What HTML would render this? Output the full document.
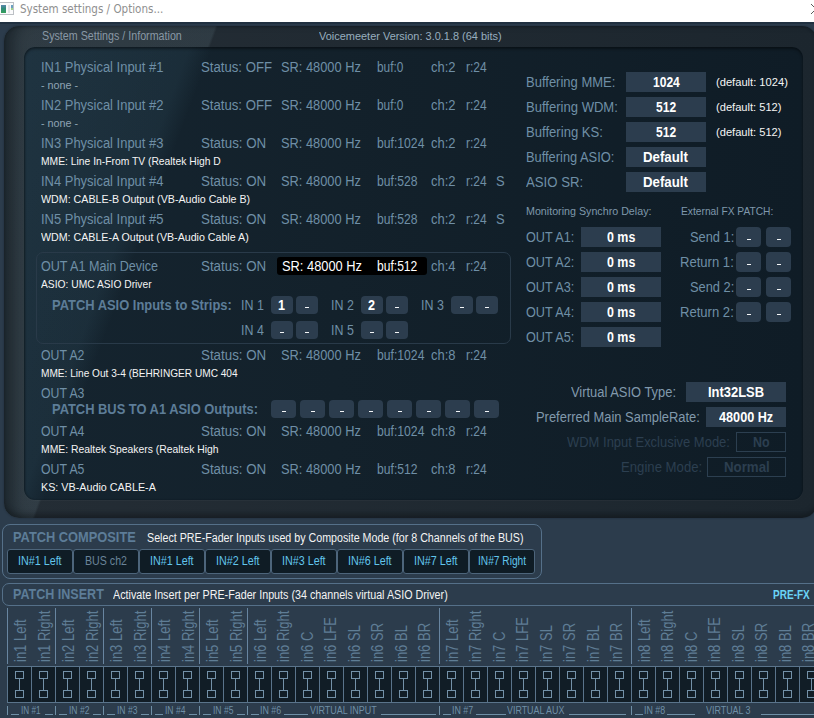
<!DOCTYPE html>
<html><head><meta charset="utf-8"><title>System settings / Options...</title>
<style>
html,body{margin:0;padding:0;}
body{width:814px;height:718px;overflow:hidden;position:relative;background:#2c3c4c;font-family:"Liberation Sans",Arial,sans-serif;}
.abs{position:absolute;white-space:nowrap;}
.t{position:absolute;white-space:nowrap;line-height:1;transform-origin:0 0;}
#titlebar{position:absolute;left:0;top:0;width:814px;height:22px;background:#fff;}
#outer{position:absolute;left:4px;top:26px;width:813px;height:492px;border-radius:15px;background:linear-gradient(110.4deg,rgba(196,243,255,0.07) 0px,rgba(196,243,255,0.08) 198px,rgba(196,243,255,0) 200.5px),linear-gradient(90deg,#242d35 0%,#1c262e 100%);box-shadow:0 0 2px rgba(10,20,30,0.45),inset 0 -4px 5px rgba(0,0,0,0.25),inset 16px 0 12px -6px rgba(8,14,20,0.4),inset 0 2px 3px -1px rgba(8,14,20,0.3);}
#inner{position:absolute;left:24px;top:47px;width:779px;height:453px;border-radius:11px;background:linear-gradient(110.4deg,rgba(137,217,255,0.085) 0px,rgba(137,217,255,0.06) 155px,rgba(137,217,255,0) 177px),linear-gradient(90deg,#15242f 0%,#13212b 40%,#0f1c26 100%);box-shadow:inset 0 2px 3px rgba(0,0,0,0.4),inset 1px 0 2px rgba(0,0,0,0.25),0 1px 1px rgba(255,255,255,0.035);}
.box{position:absolute;background:#2c3d4e;}
.obox{position:absolute;border:1px solid #2c3f50;box-sizing:border-box;}
.btn{position:absolute;border-radius:4px;background:#2c3d4e;}
.dash{position:absolute;width:4px;height:1.5px;background:#f4f6f8;}
.pc{position:absolute;top:549px;width:66px;height:25px;box-sizing:border-box;border:1px solid #4d657b;border-radius:3px;background:#0f1c25;}
.vl{position:absolute;transform-origin:0 0;font-size:17px;line-height:1;color:#5f7d95;white-space:nowrap;}
.cell{position:absolute;top:666px;width:25px;height:37px;box-sizing:border-box;border:1px solid #5a748b;background:#111d26;}
</style></head><body>
<div id="titlebar">
<svg class="abs" style="left:0;top:2px" width="15" height="14" viewBox="0 0 15 14"><rect x="-2" y="0.5" width="15.5" height="12" fill="#fbfbfc" stroke="#bcc0c5"/><defs><linearGradient id="ig" x1="0" y1="0" x2="0" y2="1"><stop offset="0" stop-color="#5a86ad"/><stop offset="0.45" stop-color="#2f8a78"/><stop offset="1" stop-color="#35a05a"/></linearGradient></defs><rect x="1" y="3" width="5" height="8" fill="url(#ig)"/><rect x="8" y="3" width="2" height="8" fill="#e2e4e7"/><rect x="11" y="3" width="2" height="4" fill="#6b9fc0"/><rect x="11" y="6" width="2" height="2" fill="#9fd08a"/></svg>
<svg class="abs" style="left:808px;top:2px" width="6" height="14" viewBox="0 0 6 14"><path d="M3 2 L13 12 M3 12 L13 2" stroke="#5a5a5a" stroke-width="1" fill="none"/></svg>
</div>
<div class="abs" style="left:0;top:22px;width:814px;height:2px;background:#203040"></div>
<div id="outer"></div>
<div id="inner"></div>
<div class="abs" style="left:36px;top:252px;width:475px;height:92px;box-sizing:border-box;border:1px solid #293a49;border-radius:7px;"></div>
<div class="abs" style="left:277px;top:257px;width:150px;height:18px;border-radius:3px;background:#000;"></div>
<div class="abs" style="left:2px;top:524px;width:540px;height:55px;box-sizing:border-box;border:1px solid #557089;border-radius:8px;"></div>
<div class="abs" style="left:2px;top:583px;width:830px;height:23px;box-sizing:border-box;border:1px solid #557089;border-radius:7px;"></div>

<div class="pc" style="left:7px"></div>
<div class="pc" style="left:73px"></div>
<div class="pc" style="left:139px"></div>
<div class="pc" style="left:205px"></div>
<div class="pc" style="left:271px"></div>
<div class="pc" style="left:337px"></div>
<div class="pc" style="left:403px"></div>
<div class="pc" style="left:469px"></div>
<div class="btn" style="left:271px;top:296px;width:22px;height:18px"></div>
<div class="btn" style="left:296px;top:296px;width:22px;height:18px"></div>
<div class="dash" style="left:305.0px;top:306.7px"></div>
<div class="btn" style="left:361px;top:296px;width:22px;height:18px"></div>
<div class="btn" style="left:386px;top:296px;width:22px;height:18px"></div>
<div class="dash" style="left:395.0px;top:306.7px"></div>
<div class="btn" style="left:451px;top:296px;width:22px;height:18px"></div>
<div class="dash" style="left:460.0px;top:306.7px"></div>
<div class="btn" style="left:476px;top:296px;width:22px;height:18px"></div>
<div class="dash" style="left:485.0px;top:306.7px"></div>
<div class="btn" style="left:271px;top:321px;width:22px;height:18px"></div>
<div class="dash" style="left:280.0px;top:331.7px"></div>
<div class="btn" style="left:296px;top:321px;width:22px;height:18px"></div>
<div class="dash" style="left:305.0px;top:331.7px"></div>
<div class="btn" style="left:361px;top:321px;width:22px;height:18px"></div>
<div class="dash" style="left:370.0px;top:331.7px"></div>
<div class="btn" style="left:386px;top:321px;width:22px;height:18px"></div>
<div class="dash" style="left:395.0px;top:331.7px"></div>
<div class="btn" style="left:271px;top:400px;width:25px;height:18px"></div>
<div class="dash" style="left:281.5px;top:410.7px"></div>
<div class="btn" style="left:300px;top:400px;width:25px;height:18px"></div>
<div class="dash" style="left:310.5px;top:410.7px"></div>
<div class="btn" style="left:329px;top:400px;width:25px;height:18px"></div>
<div class="dash" style="left:339.5px;top:410.7px"></div>
<div class="btn" style="left:358px;top:400px;width:25px;height:18px"></div>
<div class="dash" style="left:368.5px;top:410.7px"></div>
<div class="btn" style="left:387px;top:400px;width:25px;height:18px"></div>
<div class="dash" style="left:397.5px;top:410.7px"></div>
<div class="btn" style="left:416px;top:400px;width:25px;height:18px"></div>
<div class="dash" style="left:426.5px;top:410.7px"></div>
<div class="btn" style="left:445px;top:400px;width:25px;height:18px"></div>
<div class="dash" style="left:455.5px;top:410.7px"></div>
<div class="btn" style="left:474px;top:400px;width:25px;height:18px"></div>
<div class="dash" style="left:484.5px;top:410.7px"></div>
<div class="btn" style="left:736px;top:227px;width:25px;height:20px"></div>
<div class="dash" style="left:746.5px;top:238.7px"></div>
<div class="btn" style="left:766px;top:227px;width:25px;height:20px"></div>
<div class="dash" style="left:776.5px;top:238.7px"></div>
<div class="btn" style="left:736px;top:252px;width:25px;height:20px"></div>
<div class="dash" style="left:746.5px;top:263.7px"></div>
<div class="btn" style="left:766px;top:252px;width:25px;height:20px"></div>
<div class="dash" style="left:776.5px;top:263.7px"></div>
<div class="btn" style="left:736px;top:277px;width:25px;height:20px"></div>
<div class="dash" style="left:746.5px;top:288.7px"></div>
<div class="btn" style="left:766px;top:277px;width:25px;height:20px"></div>
<div class="dash" style="left:776.5px;top:288.7px"></div>
<div class="btn" style="left:736px;top:302px;width:25px;height:20px"></div>
<div class="dash" style="left:746.5px;top:313.7px"></div>
<div class="btn" style="left:766px;top:302px;width:25px;height:20px"></div>
<div class="dash" style="left:776.5px;top:313.7px"></div>
<div class="box" style="left:626px;top:72px;width:80px;height:20px"></div>
<div class="box" style="left:626px;top:97px;width:80px;height:20px"></div>
<div class="box" style="left:626px;top:122px;width:80px;height:20px"></div>
<div class="box" style="left:626px;top:147px;width:80px;height:20px"></div>
<div class="box" style="left:626px;top:172px;width:80px;height:20px"></div>
<div class="box" style="left:581px;top:227px;width:80px;height:20px"></div>
<div class="box" style="left:581px;top:252px;width:80px;height:20px"></div>
<div class="box" style="left:581px;top:277px;width:80px;height:20px"></div>
<div class="box" style="left:581px;top:302px;width:80px;height:20px"></div>
<div class="box" style="left:581px;top:327px;width:80px;height:20px"></div>
<div class="box" style="left:686px;top:382px;width:100px;height:20px"></div>
<div class="box" style="left:706px;top:407px;width:80px;height:20px"></div>
<div class="obox" style="left:736px;top:432px;width:50px;height:20px"></div>
<div class="obox" style="left:707px;top:457px;width:79px;height:20px"></div>
<div class="t" id="t0" style="left:42.1px;top:30.1px;font-size:12px;color:#8998a5;transform:scaleX(0.8920);">System Settings / Information</div>
<div class="t" id="t1" style="left:319.0px;top:31.0px;font-size:11px;color:#98aebf;transform:scaleX(0.9958);">Voicemeeter Version: 3.0.1.8 (64 bits)</div>
<div class="t" id="t2" style="left:40.5px;top:60.1px;font-size:14px;color:#6f8fa6;transform:scaleX(0.9254);">IN1 Physical Input #1</div>
<div class="t" id="t3" style="left:201.3px;top:60.1px;font-size:14px;color:#6f8fa6;transform:scaleX(0.9411);">Status: OFF</div>
<div class="t" id="t4" style="left:281.4px;top:60.1px;font-size:14px;color:#6f8fa6;transform:scaleX(0.9156);">SR: 48000 Hz</div>
<div class="t" id="t5" style="left:376.9px;top:60.1px;font-size:14px;color:#6f8fa6;transform:scaleX(0.8453);">buf:0</div>
<div class="t" id="t6" style="left:431.2px;top:60.1px;font-size:14px;color:#6f8fa6;transform:scaleX(0.9259);">ch:2</div>
<div class="t" id="t7" style="left:466.3px;top:60.1px;font-size:14px;color:#6f8fa6;transform:scaleX(0.8587);">r:24</div>
<div class="t" id="t8" style="left:41.3px;top:79.7px;font-size:11px;color:#8fa4b4;transform:scaleX(0.9805);">- none -</div>
<div class="t" id="t9" style="left:40.5px;top:98.1px;font-size:14px;color:#6f8fa6;transform:scaleX(0.9254);">IN2 Physical Input #2</div>
<div class="t" id="t10" style="left:201.3px;top:98.1px;font-size:14px;color:#6f8fa6;transform:scaleX(0.9411);">Status: OFF</div>
<div class="t" id="t11" style="left:281.4px;top:98.1px;font-size:14px;color:#6f8fa6;transform:scaleX(0.9156);">SR: 48000 Hz</div>
<div class="t" id="t12" style="left:376.9px;top:98.1px;font-size:14px;color:#6f8fa6;transform:scaleX(0.8453);">buf:0</div>
<div class="t" id="t13" style="left:431.2px;top:98.1px;font-size:14px;color:#6f8fa6;transform:scaleX(0.9259);">ch:2</div>
<div class="t" id="t14" style="left:466.3px;top:98.1px;font-size:14px;color:#6f8fa6;transform:scaleX(0.8587);">r:24</div>
<div class="t" id="t15" style="left:41.3px;top:117.7px;font-size:11px;color:#8fa4b4;transform:scaleX(0.9805);">- none -</div>
<div class="t" id="t16" style="left:40.5px;top:136.1px;font-size:14px;color:#6f8fa6;transform:scaleX(0.9254);">IN3 Physical Input #3</div>
<div class="t" id="t17" style="left:201.3px;top:136.1px;font-size:14px;color:#6f8fa6;transform:scaleX(0.9531);">Status: ON</div>
<div class="t" id="t18" style="left:281.4px;top:136.1px;font-size:14px;color:#6f8fa6;transform:scaleX(0.9156);">SR: 48000 Hz</div>
<div class="t" id="t19" style="left:376.9px;top:136.1px;font-size:14px;color:#6f8fa6;transform:scaleX(0.8700);">buf:1024</div>
<div class="t" id="t20" style="left:431.2px;top:136.1px;font-size:14px;color:#6f8fa6;transform:scaleX(0.9259);">ch:2</div>
<div class="t" id="t21" style="left:466.3px;top:136.1px;font-size:14px;color:#6f8fa6;transform:scaleX(0.8587);">r:24</div>
<div class="t" id="t22" style="left:41.3px;top:155.7px;font-size:11px;color:#f4f4f4;transform:scaleX(0.9375);">MME: Line In-From TV (Realtek High D</div>
<div class="t" id="t23" style="left:40.5px;top:174.1px;font-size:14px;color:#6f8fa6;transform:scaleX(0.9254);">IN4 Physical Input #4</div>
<div class="t" id="t24" style="left:201.3px;top:174.1px;font-size:14px;color:#6f8fa6;transform:scaleX(0.9531);">Status: ON</div>
<div class="t" id="t25" style="left:281.4px;top:174.1px;font-size:14px;color:#6f8fa6;transform:scaleX(0.9156);">SR: 48000 Hz</div>
<div class="t" id="t26" style="left:376.9px;top:174.1px;font-size:14px;color:#6f8fa6;transform:scaleX(0.8674);">buf:528</div>
<div class="t" id="t27" style="left:431.2px;top:174.1px;font-size:14px;color:#6f8fa6;transform:scaleX(0.9259);">ch:2</div>
<div class="t" id="t28" style="left:466.3px;top:174.1px;font-size:14px;color:#6f8fa6;transform:scaleX(0.8587);">r:24</div>
<div class="t" id="t29" style="left:496.2px;top:174.1px;font-size:14px;color:#6f8fa6;transform:scaleX(0.9222);">S</div>
<div class="t" id="t30" style="left:41.3px;top:193.7px;font-size:11px;color:#f4f4f4;transform:scaleX(0.9692);">WDM: CABLE-B Output (VB-Audio Cable B)</div>
<div class="t" id="t31" style="left:40.5px;top:212.1px;font-size:14px;color:#6f8fa6;transform:scaleX(0.9254);">IN5 Physical Input #5</div>
<div class="t" id="t32" style="left:201.3px;top:212.1px;font-size:14px;color:#6f8fa6;transform:scaleX(0.9531);">Status: ON</div>
<div class="t" id="t33" style="left:281.4px;top:212.1px;font-size:14px;color:#6f8fa6;transform:scaleX(0.9156);">SR: 48000 Hz</div>
<div class="t" id="t34" style="left:376.9px;top:212.1px;font-size:14px;color:#6f8fa6;transform:scaleX(0.8674);">buf:528</div>
<div class="t" id="t35" style="left:431.2px;top:212.1px;font-size:14px;color:#6f8fa6;transform:scaleX(0.9259);">ch:2</div>
<div class="t" id="t36" style="left:466.3px;top:212.1px;font-size:14px;color:#6f8fa6;transform:scaleX(0.8587);">r:24</div>
<div class="t" id="t37" style="left:496.2px;top:212.1px;font-size:14px;color:#6f8fa6;transform:scaleX(0.9222);">S</div>
<div class="t" id="t38" style="left:41.3px;top:231.7px;font-size:11px;color:#f4f4f4;transform:scaleX(0.9678);">WDM: CABLE-A Output (VB-Audio Cable A)</div>
<div class="t" id="t39" style="left:41.4px;top:259.1px;font-size:14px;color:#6f8fa6;transform:scaleX(0.8975);">OUT A1 Main Device</div>
<div class="t" id="t40" style="left:201.3px;top:259.1px;font-size:14px;color:#6f8fa6;transform:scaleX(0.9531);">Status: ON</div>
<div class="t" id="t41" style="left:431.2px;top:259.1px;font-size:14px;color:#6f8fa6;transform:scaleX(0.9259);">ch:4</div>
<div class="t" id="t42" style="left:466.3px;top:259.1px;font-size:14px;color:#6f8fa6;transform:scaleX(0.8587);">r:24</div>
<div class="t" id="t43" style="left:41.3px;top:278.7px;font-size:11px;color:#f4f4f4;transform:scaleX(0.9329);">ASIO: UMC ASIO Driver</div>
<div class="t" id="t44" style="left:281.6px;top:259.1px;font-size:14px;color:#fff;transform:scaleX(0.9179);">SR: 48000 Hz</div>
<div class="t" id="t45" style="left:377.1px;top:259.1px;font-size:14px;color:#fff;transform:scaleX(0.8631);">buf:512</div>
<div class="t" id="t46" style="left:41.4px;top:348.1px;font-size:14px;color:#6f8fa6;transform:scaleX(0.8763);">OUT A2</div>
<div class="t" id="t47" style="left:201.3px;top:348.1px;font-size:14px;color:#6f8fa6;transform:scaleX(0.9531);">Status: ON</div>
<div class="t" id="t48" style="left:281.4px;top:348.1px;font-size:14px;color:#6f8fa6;transform:scaleX(0.9156);">SR: 48000 Hz</div>
<div class="t" id="t49" style="left:376.9px;top:348.1px;font-size:14px;color:#6f8fa6;transform:scaleX(0.8700);">buf:1024</div>
<div class="t" id="t50" style="left:431.2px;top:348.1px;font-size:14px;color:#6f8fa6;transform:scaleX(0.9259);">ch:8</div>
<div class="t" id="t51" style="left:466.3px;top:348.1px;font-size:14px;color:#6f8fa6;transform:scaleX(0.8587);">r:24</div>
<div class="t" id="t52" style="left:41.3px;top:367.7px;font-size:11px;color:#f4f4f4;transform:scaleX(0.9190);">MME: Line Out 3-4 (BEHRINGER UMC 404</div>
<div class="t" id="t53" style="left:41.4px;top:386.1px;font-size:14px;color:#6f8fa6;transform:scaleX(0.8763);">OUT A3</div>
<div class="t" id="t54" style="left:41.4px;top:424.1px;font-size:14px;color:#6f8fa6;transform:scaleX(0.8763);">OUT A4</div>
<div class="t" id="t55" style="left:201.3px;top:424.1px;font-size:14px;color:#6f8fa6;transform:scaleX(0.9531);">Status: ON</div>
<div class="t" id="t56" style="left:281.4px;top:424.1px;font-size:14px;color:#6f8fa6;transform:scaleX(0.9156);">SR: 48000 Hz</div>
<div class="t" id="t57" style="left:376.9px;top:424.1px;font-size:14px;color:#6f8fa6;transform:scaleX(0.8700);">buf:1024</div>
<div class="t" id="t58" style="left:431.2px;top:424.1px;font-size:14px;color:#6f8fa6;transform:scaleX(0.9259);">ch:8</div>
<div class="t" id="t59" style="left:466.3px;top:424.1px;font-size:14px;color:#6f8fa6;transform:scaleX(0.8587);">r:24</div>
<div class="t" id="t60" style="left:41.3px;top:443.7px;font-size:11px;color:#f4f4f4;transform:scaleX(0.9433);">MME: Realtek Speakers (Realtek High</div>
<div class="t" id="t61" style="left:41.4px;top:462.1px;font-size:14px;color:#6f8fa6;transform:scaleX(0.8763);">OUT A5</div>
<div class="t" id="t62" style="left:201.3px;top:462.1px;font-size:14px;color:#6f8fa6;transform:scaleX(0.9531);">Status: ON</div>
<div class="t" id="t63" style="left:281.4px;top:462.1px;font-size:14px;color:#6f8fa6;transform:scaleX(0.9156);">SR: 48000 Hz</div>
<div class="t" id="t64" style="left:376.9px;top:462.1px;font-size:14px;color:#6f8fa6;transform:scaleX(0.8674);">buf:512</div>
<div class="t" id="t65" style="left:431.2px;top:462.1px;font-size:14px;color:#6f8fa6;transform:scaleX(0.9259);">ch:8</div>
<div class="t" id="t66" style="left:466.3px;top:462.1px;font-size:14px;color:#6f8fa6;transform:scaleX(0.8587);">r:24</div>
<div class="t" id="t67" style="left:41.3px;top:481.7px;font-size:11px;color:#f4f4f4;transform:scaleX(0.9784);">KS: VB-Audio CABLE-A</div>
<div class="t" id="t68" style="left:51.5px;top:298.1px;font-size:14px;color:#5d7d98;font-weight:bold;transform:scaleX(0.9224);">PATCH ASIO Inputs to Strips:</div>
<div class="t" id="t69" style="left:51.5px;top:401.6px;font-size:14px;color:#5d7d98;font-weight:bold;transform:scaleX(0.9205);">PATCH BUS TO A1 ASIO Outputs:</div>
<div class="t" id="t70" style="left:240.5px;top:298.1px;font-size:14px;color:#6f8fa6;transform:scaleX(0.8879);">IN 1</div>
<div class="t" id="t71" style="left:330.5px;top:298.1px;font-size:14px;color:#6f8fa6;transform:scaleX(0.8879);">IN 2</div>
<div class="t" id="t72" style="left:420.5px;top:298.1px;font-size:14px;color:#6f8fa6;transform:scaleX(0.8879);">IN 3</div>
<div class="t" id="t73" style="left:240.5px;top:323.1px;font-size:14px;color:#6f8fa6;transform:scaleX(0.8879);">IN 4</div>
<div class="t" id="t74" style="left:330.5px;top:323.1px;font-size:14px;color:#6f8fa6;transform:scaleX(0.8879);">IN 5</div>
<div class="t" id="t75" style="left:525.5px;top:75.1px;font-size:14px;color:#6f8fa6;transform:scaleX(0.9286);">Buffering MME:</div>
<div class="t" id="t76" style="left:716.3px;top:76.7px;font-size:11px;color:#f4f4f4;transform:scaleX(1.0132);">(default: 1024)</div>
<div class="t" id="t77" style="left:525.5px;top:100.1px;font-size:14px;color:#6f8fa6;transform:scaleX(0.9322);">Buffering WDM:</div>
<div class="t" id="t78" style="left:716.3px;top:101.7px;font-size:11px;color:#f4f4f4;transform:scaleX(1.0100);">(default: 512)</div>
<div class="t" id="t79" style="left:525.5px;top:125.1px;font-size:14px;color:#6f8fa6;transform:scaleX(0.9359);">Buffering KS:</div>
<div class="t" id="t80" style="left:716.3px;top:126.7px;font-size:11px;color:#f4f4f4;transform:scaleX(1.0100);">(default: 512)</div>
<div class="t" id="t81" style="left:525.5px;top:150.1px;font-size:14px;color:#6f8fa6;transform:scaleX(0.9177);">Buffering ASIO:</div>
<div class="t" id="t82" style="left:526.4px;top:175.1px;font-size:14px;color:#6f8fa6;transform:scaleX(0.9416);">ASIO SR:</div>
<div class="t" id="t83" style="left:526.4px;top:206.4px;font-size:11px;color:#7f98ab;transform:scaleX(0.9725);">Monitoring Synchro Delay:</div>
<div class="t" id="t84" style="left:681.0px;top:206.4px;font-size:11px;color:#7f98ab;transform:scaleX(0.9307);">External FX PATCH:</div>
<div class="t" id="t85" style="left:526.4px;top:230.1px;font-size:14px;color:#6f8fa6;transform:scaleX(0.9036);">OUT A1:</div>
<div class="t" id="t86" style="left:526.4px;top:255.1px;font-size:14px;color:#6f8fa6;transform:scaleX(0.9036);">OUT A2:</div>
<div class="t" id="t87" style="left:526.4px;top:280.1px;font-size:14px;color:#6f8fa6;transform:scaleX(0.9036);">OUT A3:</div>
<div class="t" id="t88" style="left:526.4px;top:305.1px;font-size:14px;color:#6f8fa6;transform:scaleX(0.9036);">OUT A4:</div>
<div class="t" id="t89" style="left:526.4px;top:330.1px;font-size:14px;color:#6f8fa6;transform:scaleX(0.9036);">OUT A5:</div>
<div class="t" id="t90" style="left:689.5px;top:230.1px;font-size:14px;color:#6f8fa6;transform:scaleX(0.9183);">Send 1:</div>
<div class="t" id="t91" style="left:680.1px;top:255.1px;font-size:14px;color:#6f8fa6;transform:scaleX(0.9336);">Return 1:</div>
<div class="t" id="t92" style="left:689.5px;top:280.1px;font-size:14px;color:#6f8fa6;transform:scaleX(0.9183);">Send 2:</div>
<div class="t" id="t93" style="left:680.1px;top:305.1px;font-size:14px;color:#6f8fa6;transform:scaleX(0.9336);">Return 2:</div>
<div class="t" id="t94" style="left:571.3px;top:385.1px;font-size:14px;color:#8199ac;transform:scaleX(0.9218);">Virtual ASIO Type:</div>
<div class="t" id="t95" style="left:535.5px;top:410.1px;font-size:14px;color:#8199ac;transform:scaleX(0.9235);">Preferred Main SampleRate:</div>
<div class="t" id="t96" style="left:566.7px;top:435.1px;font-size:14px;color:#2c3f50;transform:scaleX(0.9266);">WDM Input Exclusive Mode:</div>
<div class="t" id="t97" style="left:621.0px;top:460.1px;font-size:14px;color:#2c3f50;transform:scaleX(0.9396);">Engine Mode:</div>
<div class="t" id="t98" style="left:12.7px;top:529.9px;font-size:14px;color:#5d7d98;font-weight:bold;transform:scaleX(0.9162);">PATCH COMPOSITE</div>
<div class="t" id="t99" style="left:146.5px;top:531.8px;font-size:12px;color:#f4f4f4;transform:scaleX(0.8903);">Select PRE-Fader Inputs used by Composite Mode (for 8 Channels of the BUS)</div>
<div class="t" id="t100" style="left:18.0px;top:554.8px;font-size:12px;color:#62c5ec;transform:scaleX(0.8953);">IN#1 Left</div>
<div class="t" id="t101" style="left:85.3px;top:554.8px;font-size:12px;color:#6a8499;transform:scaleX(0.8871);">BUS ch2</div>
<div class="t" id="t102" style="left:150.0px;top:554.8px;font-size:12px;color:#62c5ec;transform:scaleX(0.8953);">IN#1 Left</div>
<div class="t" id="t103" style="left:216.0px;top:554.8px;font-size:12px;color:#62c5ec;transform:scaleX(0.8953);">IN#2 Left</div>
<div class="t" id="t104" style="left:282.0px;top:554.8px;font-size:12px;color:#62c5ec;transform:scaleX(0.8953);">IN#3 Left</div>
<div class="t" id="t105" style="left:348.0px;top:554.8px;font-size:12px;color:#62c5ec;transform:scaleX(0.8953);">IN#6 Left</div>
<div class="t" id="t106" style="left:414.0px;top:554.8px;font-size:12px;color:#62c5ec;transform:scaleX(0.8953);">IN#7 Left</div>
<div class="t" id="t107" style="left:477.8px;top:554.8px;font-size:12px;color:#62c5ec;transform:scaleX(0.8481);">IN#7 Right</div>
<div class="t" id="t108" style="left:12.7px;top:586.9px;font-size:14px;color:#5d7d98;font-weight:bold;transform:scaleX(0.8957);">PATCH INSERT</div>
<div class="t" id="t109" style="left:112.5px;top:589.1px;font-size:12px;color:#f4f4f4;transform:scaleX(0.8946);">Activate Insert per PRE-Fader Inputs (34 channels virtual ASIO Driver)</div>
<div class="t" id="t110" style="left:772.5px;top:588.6px;font-size:12px;color:#6ad4f6;font-weight:bold;transform:scaleX(0.8364);">PRE-FX</div>
<div class="t" id="t111" style="left:21.4px;top:705.8px;font-size:10px;color:#6f8fa6;transform:scaleX(0.8135);">IN #1</div>
<div class="t" id="t112" style="left:69.4px;top:705.8px;font-size:10px;color:#6f8fa6;transform:scaleX(0.8546);">IN #2</div>
<div class="t" id="t113" style="left:117.4px;top:705.8px;font-size:10px;color:#6f8fa6;transform:scaleX(0.8546);">IN #3</div>
<div class="t" id="t114" style="left:165.4px;top:705.8px;font-size:10px;color:#6f8fa6;transform:scaleX(0.8546);">IN #4</div>
<div class="t" id="t115" style="left:213.4px;top:705.8px;font-size:10px;color:#6f8fa6;transform:scaleX(0.8546);">IN #5</div>
<div class="t" id="t116" style="left:260.4px;top:705.8px;font-size:10px;color:#6f8fa6;transform:scaleX(0.8874);">IN #6</div>
<div class="t" id="t117" style="left:310.2px;top:705.8px;font-size:10px;color:#6f8fa6;transform:scaleX(0.8967);">VIRTUAL INPUT</div>
<div class="t" id="t118" style="left:452.4px;top:705.8px;font-size:10px;color:#6f8fa6;transform:scaleX(0.8874);">IN #7</div>
<div class="t" id="t119" style="left:506.5px;top:705.8px;font-size:10px;color:#6f8fa6;transform:scaleX(0.8901);">VIRTUAL AUX</div>
<div class="t" id="t120" style="left:644.4px;top:705.8px;font-size:10px;color:#6f8fa6;transform:scaleX(0.8874);">IN #8</div>
<div class="t" id="t121" style="left:705.6px;top:705.8px;font-size:10px;color:#6f8fa6;transform:scaleX(0.8912);">VIRTUAL 3</div>
<div class="t" id="t122" style="left:278.4px;top:298.1px;font-size:14px;color:#fff;font-weight:bold;transform:scaleX(0.9000);">1</div>
<div class="t" id="t123" style="left:368.4px;top:298.1px;font-size:14px;color:#fff;font-weight:bold;transform:scaleX(0.9000);">2</div>
<div class="t" id="t124" style="left:652.5px;top:75.1px;font-size:14px;color:#fff;font-weight:bold;transform:scaleX(0.8610);">1024</div>
<div class="t" id="t125" style="left:655.9px;top:100.1px;font-size:14px;color:#fff;font-weight:bold;transform:scaleX(0.8612);">512</div>
<div class="t" id="t126" style="left:655.9px;top:125.1px;font-size:14px;color:#fff;font-weight:bold;transform:scaleX(0.8612);">512</div>
<div class="t" id="t127" style="left:643.4px;top:150.1px;font-size:14px;color:#fff;font-weight:bold;transform:scaleX(0.9459);">Default</div>
<div class="t" id="t128" style="left:643.4px;top:175.1px;font-size:14px;color:#fff;font-weight:bold;transform:scaleX(0.9459);">Default</div>
<div class="t" id="t129" style="left:606.8px;top:230.1px;font-size:14px;color:#fff;font-weight:bold;transform:scaleX(0.8872);">0 ms</div>
<div class="t" id="t130" style="left:606.8px;top:255.1px;font-size:14px;color:#fff;font-weight:bold;transform:scaleX(0.8872);">0 ms</div>
<div class="t" id="t131" style="left:606.8px;top:280.1px;font-size:14px;color:#fff;font-weight:bold;transform:scaleX(0.8872);">0 ms</div>
<div class="t" id="t132" style="left:606.8px;top:305.1px;font-size:14px;color:#fff;font-weight:bold;transform:scaleX(0.8872);">0 ms</div>
<div class="t" id="t133" style="left:606.8px;top:330.1px;font-size:14px;color:#fff;font-weight:bold;transform:scaleX(0.8872);">0 ms</div>
<div class="t" id="t134" style="left:708.0px;top:385.1px;font-size:14px;color:#fff;font-weight:bold;transform:scaleX(0.9246);">Int32LSB</div>
<div class="t" id="t135" style="left:718.9px;top:410.1px;font-size:14px;color:#fff;font-weight:bold;transform:scaleX(0.9044);">48000 Hz</div>
<div class="t" id="t136" style="left:753.0px;top:435.1px;font-size:14px;color:#2c3f50;font-weight:bold;transform:scaleX(0.8890);">No</div>
<div class="t" id="t137" style="left:724.0px;top:460.1px;font-size:14px;color:#2c3f50;font-weight:bold;transform:scaleX(0.9484);">Normal</div>
<div class="t" id="t138" style="left:20.3px;top:3.0px;font-size:12px;color:#8f8f8f;font-family:'DejaVu Sans','Liberation Sans',sans-serif;transform:scaleX(0.8642);">System settings / Options...</div>
<div class="vl" style="left:11.8px;top:661.5px;transform:rotate(-90deg) scaleX(0.765);">in1 Left</div>
<div class="cell" style="left:7px"><svg width="23" height="34" viewBox="0 0 23 34" style="display:block"><g fill="none" stroke="#7391a8" stroke-width="1"><rect x="7.5" y="4.5" width="8" height="7"/><rect x="7.5" y="23.5" width="8" height="7"/><path d="M11.5 11.5V23.5"/></g></svg></div>
<div class="vl" style="left:35.8px;top:661.5px;transform:rotate(-90deg) scaleX(0.765);">in1 Right</div>
<div class="cell" style="left:31px"><svg width="23" height="34" viewBox="0 0 23 34" style="display:block"><g fill="none" stroke="#7391a8" stroke-width="1"><rect x="7.5" y="4.5" width="8" height="7"/><rect x="7.5" y="23.5" width="8" height="7"/><path d="M11.5 11.5V23.5"/></g></svg></div>
<div class="vl" style="left:59.8px;top:661.5px;transform:rotate(-90deg) scaleX(0.765);">in2 Left</div>
<div class="cell" style="left:55px"><svg width="23" height="34" viewBox="0 0 23 34" style="display:block"><g fill="none" stroke="#7391a8" stroke-width="1"><rect x="7.5" y="4.5" width="8" height="7"/><rect x="7.5" y="23.5" width="8" height="7"/><path d="M11.5 11.5V23.5"/></g></svg></div>
<div class="vl" style="left:83.8px;top:661.5px;transform:rotate(-90deg) scaleX(0.765);">in2 Right</div>
<div class="cell" style="left:79px"><svg width="23" height="34" viewBox="0 0 23 34" style="display:block"><g fill="none" stroke="#7391a8" stroke-width="1"><rect x="7.5" y="4.5" width="8" height="7"/><rect x="7.5" y="23.5" width="8" height="7"/><path d="M11.5 11.5V23.5"/></g></svg></div>
<div class="vl" style="left:107.8px;top:661.5px;transform:rotate(-90deg) scaleX(0.765);">in3 Left</div>
<div class="cell" style="left:103px"><svg width="23" height="34" viewBox="0 0 23 34" style="display:block"><g fill="none" stroke="#7391a8" stroke-width="1"><rect x="7.5" y="4.5" width="8" height="7"/><rect x="7.5" y="23.5" width="8" height="7"/><path d="M11.5 11.5V23.5"/></g></svg></div>
<div class="vl" style="left:131.8px;top:661.5px;transform:rotate(-90deg) scaleX(0.765);">in3 Right</div>
<div class="cell" style="left:127px"><svg width="23" height="34" viewBox="0 0 23 34" style="display:block"><g fill="none" stroke="#7391a8" stroke-width="1"><rect x="7.5" y="4.5" width="8" height="7"/><rect x="7.5" y="23.5" width="8" height="7"/><path d="M11.5 11.5V23.5"/></g></svg></div>
<div class="vl" style="left:155.8px;top:661.5px;transform:rotate(-90deg) scaleX(0.765);">in4 Left</div>
<div class="cell" style="left:151px"><svg width="23" height="34" viewBox="0 0 23 34" style="display:block"><g fill="none" stroke="#7391a8" stroke-width="1"><rect x="7.5" y="4.5" width="8" height="7"/><rect x="7.5" y="23.5" width="8" height="7"/><path d="M11.5 11.5V23.5"/></g></svg></div>
<div class="vl" style="left:179.8px;top:661.5px;transform:rotate(-90deg) scaleX(0.765);">in4 Right</div>
<div class="cell" style="left:175px"><svg width="23" height="34" viewBox="0 0 23 34" style="display:block"><g fill="none" stroke="#7391a8" stroke-width="1"><rect x="7.5" y="4.5" width="8" height="7"/><rect x="7.5" y="23.5" width="8" height="7"/><path d="M11.5 11.5V23.5"/></g></svg></div>
<div class="vl" style="left:203.8px;top:661.5px;transform:rotate(-90deg) scaleX(0.765);">in5 Left</div>
<div class="cell" style="left:199px"><svg width="23" height="34" viewBox="0 0 23 34" style="display:block"><g fill="none" stroke="#7391a8" stroke-width="1"><rect x="7.5" y="4.5" width="8" height="7"/><rect x="7.5" y="23.5" width="8" height="7"/><path d="M11.5 11.5V23.5"/></g></svg></div>
<div class="vl" style="left:227.8px;top:661.5px;transform:rotate(-90deg) scaleX(0.765);">in5 Right</div>
<div class="cell" style="left:223px"><svg width="23" height="34" viewBox="0 0 23 34" style="display:block"><g fill="none" stroke="#7391a8" stroke-width="1"><rect x="7.5" y="4.5" width="8" height="7"/><rect x="7.5" y="23.5" width="8" height="7"/><path d="M11.5 11.5V23.5"/></g></svg></div>
<div class="vl" style="left:251.5px;top:661.5px;transform:rotate(-90deg) scaleX(0.765);">in6 Left</div>
<div class="cell" style="left:247px"><svg width="23" height="34" viewBox="0 0 23 34" style="display:block"><g fill="none" stroke="#7391a8" stroke-width="1"><rect x="7.5" y="4.5" width="8" height="7"/><rect x="7.5" y="23.5" width="8" height="7"/><path d="M11.5 11.5V23.5"/></g></svg></div>
<div class="vl" style="left:275.0px;top:661.5px;transform:rotate(-90deg) scaleX(0.765);">in6 Right</div>
<div class="cell" style="left:271px"><svg width="23" height="34" viewBox="0 0 23 34" style="display:block"><g fill="none" stroke="#7391a8" stroke-width="1"><rect x="7.5" y="4.5" width="8" height="7"/><rect x="7.5" y="23.5" width="8" height="7"/><path d="M11.5 11.5V23.5"/></g></svg></div>
<div class="vl" style="left:298.5px;top:661.5px;transform:rotate(-90deg) scaleX(0.765);">in6 C</div>
<div class="cell" style="left:295px"><svg width="23" height="34" viewBox="0 0 23 34" style="display:block"><g fill="none" stroke="#7391a8" stroke-width="1"><rect x="7.5" y="4.5" width="8" height="7"/><rect x="7.5" y="23.5" width="8" height="7"/><path d="M11.5 11.5V23.5"/></g></svg></div>
<div class="vl" style="left:322.0px;top:661.5px;transform:rotate(-90deg) scaleX(0.765);">in6 LFE</div>
<div class="cell" style="left:319px"><svg width="23" height="34" viewBox="0 0 23 34" style="display:block"><g fill="none" stroke="#7391a8" stroke-width="1"><rect x="7.5" y="4.5" width="8" height="7"/><rect x="7.5" y="23.5" width="8" height="7"/><path d="M11.5 11.5V23.5"/></g></svg></div>
<div class="vl" style="left:345.5px;top:661.5px;transform:rotate(-90deg) scaleX(0.765);">in6 SL</div>
<div class="cell" style="left:343px"><svg width="23" height="34" viewBox="0 0 23 34" style="display:block"><g fill="none" stroke="#7391a8" stroke-width="1"><rect x="7.5" y="4.5" width="8" height="7"/><rect x="7.5" y="23.5" width="8" height="7"/><path d="M11.5 11.5V23.5"/></g></svg></div>
<div class="vl" style="left:369.0px;top:661.5px;transform:rotate(-90deg) scaleX(0.765);">in6 SR</div>
<div class="cell" style="left:367px"><svg width="23" height="34" viewBox="0 0 23 34" style="display:block"><g fill="none" stroke="#7391a8" stroke-width="1"><rect x="7.5" y="4.5" width="8" height="7"/><rect x="7.5" y="23.5" width="8" height="7"/><path d="M11.5 11.5V23.5"/></g></svg></div>
<div class="vl" style="left:392.5px;top:661.5px;transform:rotate(-90deg) scaleX(0.765);">in6 BL</div>
<div class="cell" style="left:391px"><svg width="23" height="34" viewBox="0 0 23 34" style="display:block"><g fill="none" stroke="#7391a8" stroke-width="1"><rect x="7.5" y="4.5" width="8" height="7"/><rect x="7.5" y="23.5" width="8" height="7"/><path d="M11.5 11.5V23.5"/></g></svg></div>
<div class="vl" style="left:416.0px;top:661.5px;transform:rotate(-90deg) scaleX(0.765);">in6 BR</div>
<div class="cell" style="left:415px"><svg width="23" height="34" viewBox="0 0 23 34" style="display:block"><g fill="none" stroke="#7391a8" stroke-width="1"><rect x="7.5" y="4.5" width="8" height="7"/><rect x="7.5" y="23.5" width="8" height="7"/><path d="M11.5 11.5V23.5"/></g></svg></div>
<div class="vl" style="left:443.5px;top:661.5px;transform:rotate(-90deg) scaleX(0.765);">in7 Left</div>
<div class="cell" style="left:439px"><svg width="23" height="34" viewBox="0 0 23 34" style="display:block"><g fill="none" stroke="#7391a8" stroke-width="1"><rect x="7.5" y="4.5" width="8" height="7"/><rect x="7.5" y="23.5" width="8" height="7"/><path d="M11.5 11.5V23.5"/></g></svg></div>
<div class="vl" style="left:467.0px;top:661.5px;transform:rotate(-90deg) scaleX(0.765);">in7 Right</div>
<div class="cell" style="left:463px"><svg width="23" height="34" viewBox="0 0 23 34" style="display:block"><g fill="none" stroke="#7391a8" stroke-width="1"><rect x="7.5" y="4.5" width="8" height="7"/><rect x="7.5" y="23.5" width="8" height="7"/><path d="M11.5 11.5V23.5"/></g></svg></div>
<div class="vl" style="left:490.5px;top:661.5px;transform:rotate(-90deg) scaleX(0.765);">in7 C</div>
<div class="cell" style="left:487px"><svg width="23" height="34" viewBox="0 0 23 34" style="display:block"><g fill="none" stroke="#7391a8" stroke-width="1"><rect x="7.5" y="4.5" width="8" height="7"/><rect x="7.5" y="23.5" width="8" height="7"/><path d="M11.5 11.5V23.5"/></g></svg></div>
<div class="vl" style="left:514.0px;top:661.5px;transform:rotate(-90deg) scaleX(0.765);">in7 LFE</div>
<div class="cell" style="left:511px"><svg width="23" height="34" viewBox="0 0 23 34" style="display:block"><g fill="none" stroke="#7391a8" stroke-width="1"><rect x="7.5" y="4.5" width="8" height="7"/><rect x="7.5" y="23.5" width="8" height="7"/><path d="M11.5 11.5V23.5"/></g></svg></div>
<div class="vl" style="left:537.5px;top:661.5px;transform:rotate(-90deg) scaleX(0.765);">in7 SL</div>
<div class="cell" style="left:535px"><svg width="23" height="34" viewBox="0 0 23 34" style="display:block"><g fill="none" stroke="#7391a8" stroke-width="1"><rect x="7.5" y="4.5" width="8" height="7"/><rect x="7.5" y="23.5" width="8" height="7"/><path d="M11.5 11.5V23.5"/></g></svg></div>
<div class="vl" style="left:561.0px;top:661.5px;transform:rotate(-90deg) scaleX(0.765);">in7 SR</div>
<div class="cell" style="left:559px"><svg width="23" height="34" viewBox="0 0 23 34" style="display:block"><g fill="none" stroke="#7391a8" stroke-width="1"><rect x="7.5" y="4.5" width="8" height="7"/><rect x="7.5" y="23.5" width="8" height="7"/><path d="M11.5 11.5V23.5"/></g></svg></div>
<div class="vl" style="left:584.5px;top:661.5px;transform:rotate(-90deg) scaleX(0.765);">in7 BL</div>
<div class="cell" style="left:583px"><svg width="23" height="34" viewBox="0 0 23 34" style="display:block"><g fill="none" stroke="#7391a8" stroke-width="1"><rect x="7.5" y="4.5" width="8" height="7"/><rect x="7.5" y="23.5" width="8" height="7"/><path d="M11.5 11.5V23.5"/></g></svg></div>
<div class="vl" style="left:608.0px;top:661.5px;transform:rotate(-90deg) scaleX(0.765);">in7 BR</div>
<div class="cell" style="left:607px"><svg width="23" height="34" viewBox="0 0 23 34" style="display:block"><g fill="none" stroke="#7391a8" stroke-width="1"><rect x="7.5" y="4.5" width="8" height="7"/><rect x="7.5" y="23.5" width="8" height="7"/><path d="M11.5 11.5V23.5"/></g></svg></div>
<div class="vl" style="left:635.5px;top:661.5px;transform:rotate(-90deg) scaleX(0.765);">in8 Left</div>
<div class="cell" style="left:631px"><svg width="23" height="34" viewBox="0 0 23 34" style="display:block"><g fill="none" stroke="#7391a8" stroke-width="1"><rect x="7.5" y="4.5" width="8" height="7"/><rect x="7.5" y="23.5" width="8" height="7"/><path d="M11.5 11.5V23.5"/></g></svg></div>
<div class="vl" style="left:659.0px;top:661.5px;transform:rotate(-90deg) scaleX(0.765);">in8 Right</div>
<div class="cell" style="left:655px"><svg width="23" height="34" viewBox="0 0 23 34" style="display:block"><g fill="none" stroke="#7391a8" stroke-width="1"><rect x="7.5" y="4.5" width="8" height="7"/><rect x="7.5" y="23.5" width="8" height="7"/><path d="M11.5 11.5V23.5"/></g></svg></div>
<div class="vl" style="left:682.5px;top:661.5px;transform:rotate(-90deg) scaleX(0.765);">in8 C</div>
<div class="cell" style="left:679px"><svg width="23" height="34" viewBox="0 0 23 34" style="display:block"><g fill="none" stroke="#7391a8" stroke-width="1"><rect x="7.5" y="4.5" width="8" height="7"/><rect x="7.5" y="23.5" width="8" height="7"/><path d="M11.5 11.5V23.5"/></g></svg></div>
<div class="vl" style="left:706.0px;top:661.5px;transform:rotate(-90deg) scaleX(0.765);">in8 LFE</div>
<div class="cell" style="left:703px"><svg width="23" height="34" viewBox="0 0 23 34" style="display:block"><g fill="none" stroke="#7391a8" stroke-width="1"><rect x="7.5" y="4.5" width="8" height="7"/><rect x="7.5" y="23.5" width="8" height="7"/><path d="M11.5 11.5V23.5"/></g></svg></div>
<div class="vl" style="left:729.5px;top:661.5px;transform:rotate(-90deg) scaleX(0.765);">in8 SL</div>
<div class="cell" style="left:727px"><svg width="23" height="34" viewBox="0 0 23 34" style="display:block"><g fill="none" stroke="#7391a8" stroke-width="1"><rect x="7.5" y="4.5" width="8" height="7"/><rect x="7.5" y="23.5" width="8" height="7"/><path d="M11.5 11.5V23.5"/></g></svg></div>
<div class="vl" style="left:753.0px;top:661.5px;transform:rotate(-90deg) scaleX(0.765);">in8 SR</div>
<div class="cell" style="left:751px"><svg width="23" height="34" viewBox="0 0 23 34" style="display:block"><g fill="none" stroke="#7391a8" stroke-width="1"><rect x="7.5" y="4.5" width="8" height="7"/><rect x="7.5" y="23.5" width="8" height="7"/><path d="M11.5 11.5V23.5"/></g></svg></div>
<div class="vl" style="left:776.5px;top:661.5px;transform:rotate(-90deg) scaleX(0.765);">in8 BL</div>
<div class="cell" style="left:775px"><svg width="23" height="34" viewBox="0 0 23 34" style="display:block"><g fill="none" stroke="#7391a8" stroke-width="1"><rect x="7.5" y="4.5" width="8" height="7"/><rect x="7.5" y="23.5" width="8" height="7"/><path d="M11.5 11.5V23.5"/></g></svg></div>
<div class="vl" style="left:800.0px;top:661.5px;transform:rotate(-90deg) scaleX(0.765);">in8 BR</div>
<div class="cell" style="left:799px"><svg width="23" height="34" viewBox="0 0 23 34" style="display:block"><g fill="none" stroke="#7391a8" stroke-width="1"><rect x="7.5" y="4.5" width="8" height="7"/><rect x="7.5" y="23.5" width="8" height="7"/><path d="M11.5 11.5V23.5"/></g></svg></div>
<div class="abs" style="left:7px;top:608px;width:1px;height:56px;background:#6885a0"></div>
<div class="abs" style="left:7px;top:706px;width:1px;height:9px;background:#6f8fa6"></div>
<div class="abs" style="left:55px;top:608px;width:1px;height:56px;background:#6885a0"></div>
<div class="abs" style="left:55px;top:706px;width:1px;height:9px;background:#6f8fa6"></div>
<div class="abs" style="left:103px;top:608px;width:1px;height:56px;background:#6885a0"></div>
<div class="abs" style="left:103px;top:706px;width:1px;height:9px;background:#6f8fa6"></div>
<div class="abs" style="left:151px;top:608px;width:1px;height:56px;background:#6885a0"></div>
<div class="abs" style="left:151px;top:706px;width:1px;height:9px;background:#6f8fa6"></div>
<div class="abs" style="left:199px;top:608px;width:1px;height:56px;background:#6885a0"></div>
<div class="abs" style="left:199px;top:706px;width:1px;height:9px;background:#6f8fa6"></div>
<div class="abs" style="left:247px;top:608px;width:1px;height:56px;background:#6885a0"></div>
<div class="abs" style="left:247px;top:706px;width:1px;height:9px;background:#6f8fa6"></div>
<div class="abs" style="left:439px;top:608px;width:1px;height:56px;background:#6885a0"></div>
<div class="abs" style="left:439px;top:706px;width:1px;height:9px;background:#6f8fa6"></div>
<div class="abs" style="left:631px;top:608px;width:1px;height:56px;background:#6885a0"></div>
<div class="abs" style="left:631px;top:706px;width:1px;height:9px;background:#6f8fa6"></div>
<div class="abs" style="left:10.5px;top:714px;width:8px;height:1px;background:#6f8fa6"></div>
<div class="abs" style="left:44.7px;top:714px;width:8px;height:1px;background:#6f8fa6"></div>
<div class="abs" style="left:58.5px;top:714px;width:8px;height:1px;background:#6f8fa6"></div>
<div class="abs" style="left:92.7px;top:714px;width:8px;height:1px;background:#6f8fa6"></div>
<div class="abs" style="left:106.5px;top:714px;width:8px;height:1px;background:#6f8fa6"></div>
<div class="abs" style="left:140.7px;top:714px;width:8px;height:1px;background:#6f8fa6"></div>
<div class="abs" style="left:154.5px;top:714px;width:8px;height:1px;background:#6f8fa6"></div>
<div class="abs" style="left:188.7px;top:714px;width:8px;height:1px;background:#6f8fa6"></div>
<div class="abs" style="left:202.5px;top:714px;width:8px;height:1px;background:#6f8fa6"></div>
<div class="abs" style="left:236.7px;top:714px;width:8px;height:1px;background:#6f8fa6"></div>
<div class="abs" style="left:250.5px;top:714px;width:8px;height:1px;background:#6f8fa6"></div>
<div class="abs" style="left:283.7px;top:714px;width:24.0px;height:1px;background:#6f8fa6"></div>
<div class="abs" style="left:380.5px;top:714px;width:55.0px;height:1px;background:#6f8fa6"></div>
<div class="abs" style="left:442.5px;top:714px;width:8px;height:1px;background:#6f8fa6"></div>
<div class="abs" style="left:476px;top:714px;width:29.5px;height:1px;background:#6f8fa6"></div>
<div class="abs" style="left:568.5px;top:714px;width:57.0px;height:1px;background:#6f8fa6"></div>
<div class="abs" style="left:634.5px;top:714px;width:8px;height:1px;background:#6f8fa6"></div>
<div class="abs" style="left:666.8px;top:714px;width:28.200000000000045px;height:1px;background:#6f8fa6"></div>
<div class="abs" style="left:760.7px;top:714px;width:59.299999999999955px;height:1px;background:#6f8fa6"></div>
</body></html>
